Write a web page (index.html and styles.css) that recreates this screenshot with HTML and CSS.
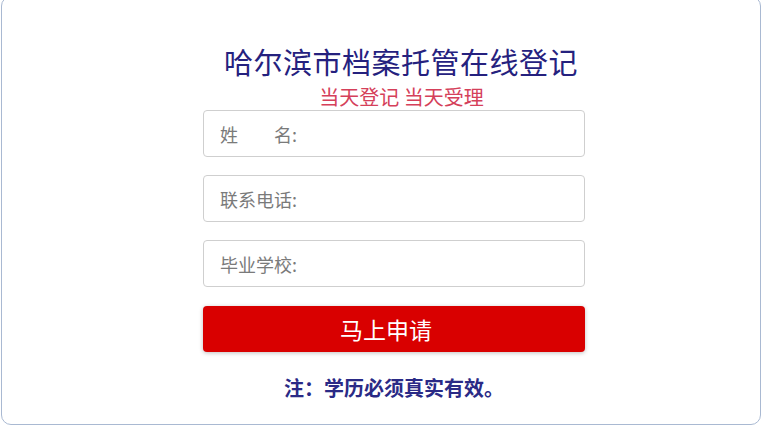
FILE: index.html
```html
<!DOCTYPE html>
<html lang="zh-CN">
<head>
<meta charset="utf-8">
<title>哈尔滨市档案托管在线登记</title>
<link rel="stylesheet" href="styles.css">
</head>
<body>
<div class="card">
  <div class="form">
    <h1 class="title">哈尔滨市档案托管在线登记</h1>
    <p class="subtitle">当天登记 当天受理</p>
    <input class="field" type="text" placeholder="姓　　名:">
    <input class="field" type="text" placeholder="联系电话:">
    <input class="field" type="text" placeholder="毕业学校:">
    <button class="submit" type="button">马上申请</button>
    <p class="note">注：学历必须真实有效。</p>
  </div>
</div>
</body>
</html>
```

FILE: styles.css
```css
html, body {
  margin: 0;
  padding: 0;
  background: #ffffff;
}
body {
  font-family: "Noto Sans CJK SC", "Noto Sans", sans-serif;
  overflow: hidden;
}
.card {
  box-sizing: border-box;
  width: 760px;
  height: 429px;
  margin: -4px 0 0 1px;
  border: 1px solid #a9b9d2;
  border-radius: 10px;
  padding-top: 46px;
}
.form {
  width: 382px;
  margin-left: 201px;
  display: flex;
  flex-direction: column;
}
.title {
  margin: 0 0 0 14px;
  font-size: 29px;
  line-height: 36px;
  font-weight: normal;
  color: #25217e;
  text-align: center;
  letter-spacing: 0.5px;
}
.subtitle {
  margin: 6px 0 0 15px;
  font-size: 20px;
  line-height: 24px;
  color: #d5405a;
  text-align: center;
}
.field {
  box-sizing: border-box;
  height: 47px;
  margin: 1px 0 0 0;
  padding: 0 16px;
  border: 1px solid #cfcfcf;
  border-radius: 4px;
  font-family: inherit;
  font-size: 18px;
  color: #555;
  background: #fff;
  outline: none;
}
.field + .field {
  margin-top: 18px;
}
.field::placeholder {
  color: #7a7a7a;
  opacity: 1;
}
.submit {
  box-sizing: border-box;
  height: 46px;
  margin-top: 19px;
  padding: 0 16px 0 0;
  border: none;
  border-radius: 4px;
  background: #d90000;
  color: #ffffff;
  font-family: inherit;
  font-size: 23px;
  box-shadow: 0 1px 4px rgba(0, 0, 0, 0.25);
}
.note {
  margin: 24px 0 0 0;
  font-size: 20px;
  line-height: 24px;
  font-weight: bold;
  color: #2a2a86;
  text-align: center;
}
```
